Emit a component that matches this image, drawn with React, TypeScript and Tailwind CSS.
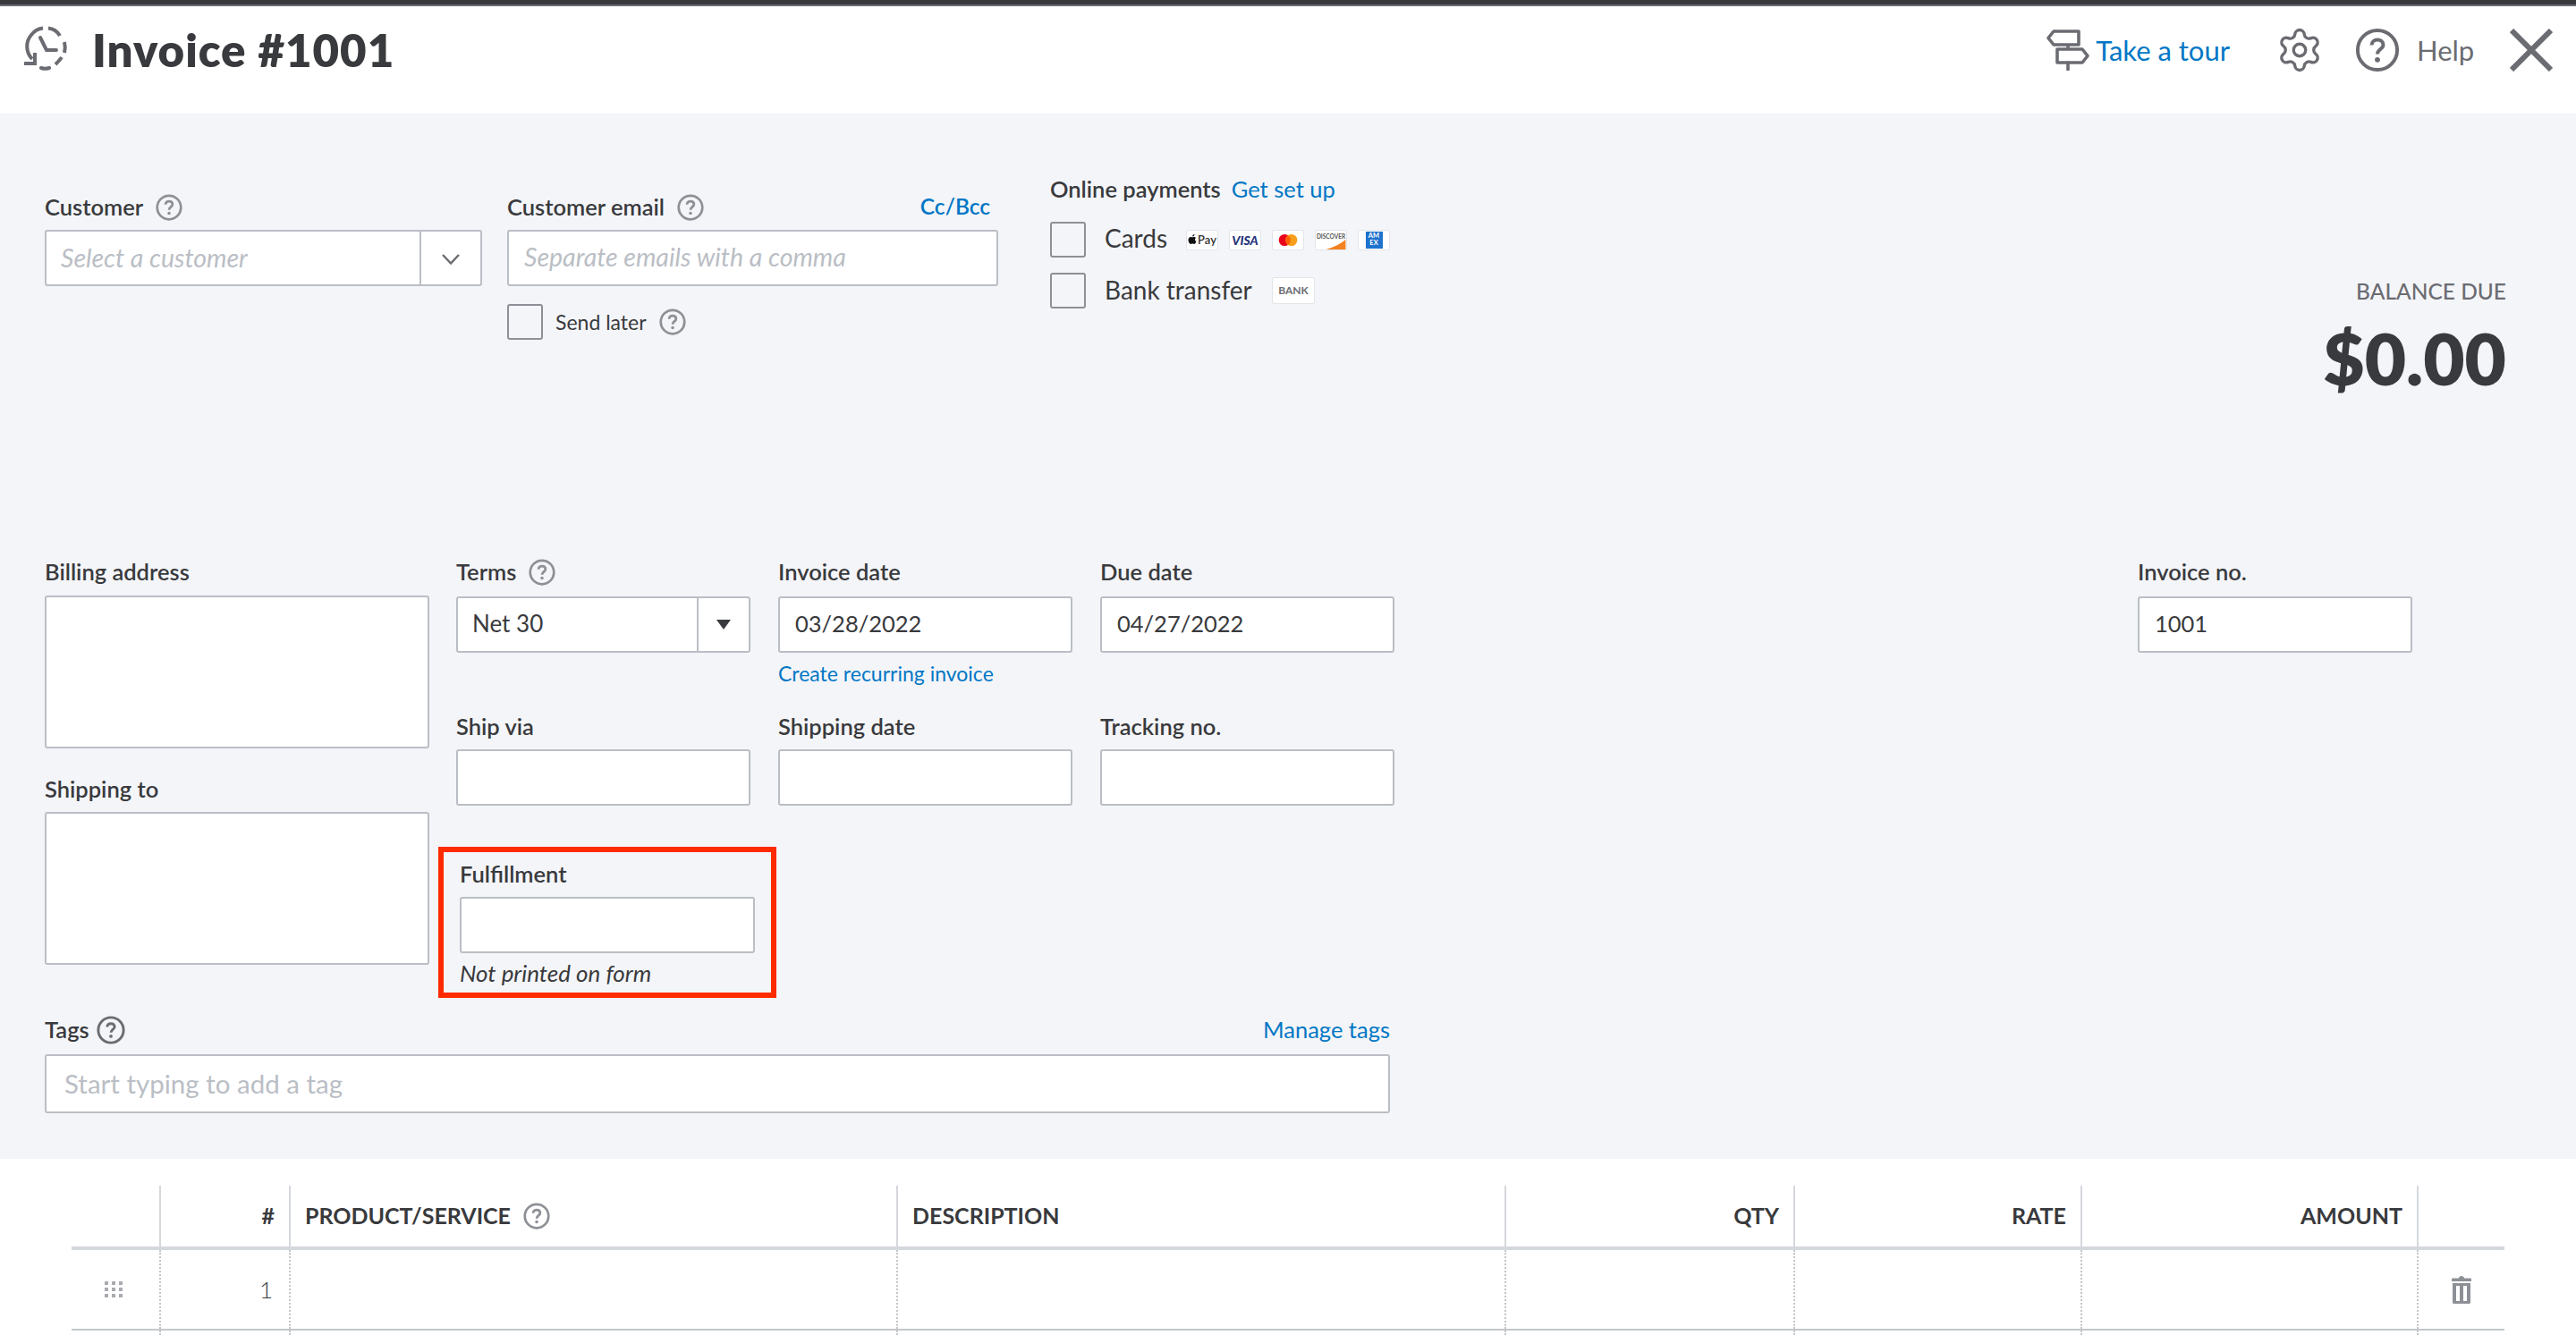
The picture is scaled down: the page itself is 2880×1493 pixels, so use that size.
import { Settings } from "lucide-react";

function HelpIcon({ className = "h-[30px] w-[30px]", strokeWidth = 2.2 }: { className?: string; strokeWidth?: number }) {
  return (
    <svg viewBox="0 0 24 24" fill="none" className={className}>
      <circle cx="12" cy="12" r="10.6" stroke="currentColor" strokeWidth={strokeWidth} />
      <path
        d="M8.9 9.400c0-1.800 1.300-2.900 3.100-2.900s3.100 1.100 3.100 2.700c0 2.300-3.100 2.400-3.100 4.900"
        stroke="currentColor"
        strokeWidth={strokeWidth}
      />
      <circle cx="12" cy="17.200" r="1.400" fill="currentColor" />
    </svg>
  );
}

function Label({ children, className = "" }: { children: React.ReactNode; className?: string }) {
  return (
    <div className={`flex h-[28px] items-center pb-[2px] text-[25.5px] font-semibold text-[#393a3d] ${className}`}>
      {children}
    </div>
  );
}

function Hint() {
  return (
    <span className="ml-[14px] mt-[2px] text-[#8d9096]">
      <HelpIcon />
    </span>
  );
}

function Input({ value, placeholder }: { value?: string; placeholder?: string }) {
  return (
    <div className="flex h-[63px] items-center rounded-[3px] border-2 border-[#babec5] bg-white px-[17px] pb-[2px] text-[25.5px] text-[#393a3d]">
      {value}
      {placeholder && <span className="text-[28.5px] italic text-[#babec5]">{placeholder}</span>}
    </div>
  );
}

function Checkbox() {
  return <div className="h-[40px] w-[40px] shrink-0 rounded-[3px] border-2 border-[#8d9096] bg-[#f4f5f8]" />;
}

function Badge({ children, className = "" }: { children: React.ReactNode; className?: string }) {
  return (
    <div
      className={`flex h-[23px] w-[36px] items-center justify-center overflow-hidden rounded-[2px] border border-[#e3e5e8] bg-white ${className}`}
    >
      {children}
    </div>
  );
}

function Payments() {
  return (
    <div className="w-[440px]">
      <div className="flex h-[28px] items-center gap-[12px] pb-[2px] text-[25.5px]">
        <span className="font-semibold text-[#393a3d]">Online payments</span>
        <span className="text-[#0077c5]">Get set up</span>
      </div>
      <div className="mt-[22px] flex h-[40px] items-center">
        <Checkbox />
        <span className="ml-[21px] w-[91px] pb-[4px] text-[28px] text-[#393a3d]">Cards</span>
        <div className="flex items-center gap-[12px]">
          <Badge className="gap-[1px] border-[#8d9096]">
            <svg viewBox="0 0 10 12" className="h-[12px] w-[10px]">
              <path
                d="M7.500 0c0 1.300-.9 2.500-2.300 2.500C5.100 1.200 6.200.1 7.500 0zM5 3.300c.7 0 1.100-.4 2-.4.800 0 1.500.4 2 1-1.600 1-1.300 3.200.5 4-.5 1.300-1.400 3-2.500 3-.7 0-1-.4-1.900-.4s-1.200.4-1.900.4C1.900 10.900.500 8.500.500 6.500.500 4.300 1.900 3 3.200 3c.7 0 1.300.3 1.800.3z"
                fill="#111"
              />
            </svg>
            <span className="text-[13px] font-semibold leading-none text-[#333]">Pay</span>
          </Badge>
          <Badge>
            <span className="text-[14px] font-black italic text-[#26337a]">VISA</span>
          </Badge>
          <Badge>
            <svg viewBox="0 0 24 16" className="h-[15px] w-[24px]">
              <circle cx="8" cy="8" r="7" fill="#eb001b" />
              <circle cx="16" cy="8" r="7" fill="#f79e1b" />
              <path d="M12 2.300a7 7 0 0 1 0 11.400a7 7 0 0 1 0-11.400z" fill="#ff5f00" />
            </svg>
          </Badge>
          <Badge className="relative">
            <span className="mb-[6px] text-[6.500px] font-bold text-[#555]">DISCOVER</span>
            <svg viewBox="0 0 36 23" className="absolute inset-0 h-full w-full">
              <path d="M12 23C22 20 30 16 36 11V23Z" fill="#f58220" />
            </svg>
          </Badge>
          <Badge>
            <div className="flex h-[19px] w-[19px] flex-col items-center justify-center bg-[#1f72cd] text-[7.500px] font-bold leading-[8px] text-white">
              <span>AM</span>
              <span>EX</span>
            </div>
          </Badge>
        </div>
      </div>
      <div className="mt-[17px] flex h-[40px] items-center">
        <Checkbox />
        <span className="ml-[21px] w-[187px] pb-[2px] text-[28px] text-[#393a3d]">Bank transfer</span>
        <Badge className="h-[30px] w-[48px] border-[#dcdee2]">
          <span className="text-[12px] font-bold text-[#6b6c72]">BANK</span>
        </Badge>
      </div>
    </div>
  );
}

function Header() {
  return (
    <header className="h-[127px] bg-white">
      <div className="h-[5px] bg-[#393a3d]" />
      <div className="h-[2px] bg-[#6b6c72]" />
      <div className="flex items-start pl-[26px] pr-[26px] pt-[22px] text-[#6b6c72]">
        <svg viewBox="0 0 52 50" fill="none" stroke="currentColor" strokeWidth="4" className="h-[50px] w-[52px]">
          <path d="M10 37C3 30 2 18 9 10C12 6 17 3 22 2.500" />
          <path d="M28 2.500C33 3 38 6 41 11" />
          <path d="M46 18C47 22 47 26 46 30" />
          <path d="M43 35C41 38 39 40 36 43" />
          <path d="M29 47C26 48 23 48 20 47" strokeLinecap="round" />
          <path d="M1 42H13V30" />
          <path d="M19 13L26 27H37" strokeLinecap="round" />
        </svg>
        <h1 className="ml-[25px] -mt-[2px] text-[51px] font-extrabold leading-[58px] tracking-[1px] text-[#393a3d]">
          Invoice #1001
        </h1>
        <div className="ml-auto flex items-center">
          <svg viewBox="0 0 48 46" fill="none" stroke="currentColor" strokeWidth="3.600" strokeLinejoin="round" className="h-[46px] w-[48px]">
            <path d="M8 2H36V17H8L2 9.500Z" />
            <path d="M24 17V22" />
            <path d="M12 22H40L46 29.500L40 37H12Z" />
            <path d="M24 37V45" strokeLinecap="round" />
          </svg>
          <span className="ml-[7px] text-[31px] text-[#0077c5]">Take a tour</span>
          <Settings className="ml-[51px] h-[54px] w-[54px]" strokeWidth={1.500} />
          <HelpIcon className="ml-[35px] h-[50px] w-[50px]" strokeWidth={1.900} />
          <span className="ml-[19px] w-[62px] text-[31px]">Help</span>
          <svg viewBox="0 0 48 48" stroke="currentColor" strokeWidth="6" className="ml-[42px] h-[48px] w-[48px]">
            <path d="M2 2L46 46M46 2L2 46" />
          </svg>
        </div>
      </div>
    </header>
  );
}

function InvoiceForm() {
  return (
    <section className="bg-[#f4f5f8] pl-[50px] pt-[71px]">
      {/* customer row */}
      <div className="flex h-[428px] items-start">
        <div className="mt-[20px] w-[489px]">
          <Label className="mb-[11px]">
            Customer
            <Hint />
          </Label>
          <div className="flex h-[63px] rounded-[3px] border-2 border-[#babec5] bg-white">
            <div className="flex flex-1 items-center pl-[16px] text-[28.5px] italic text-[#babec5]">Select a customer</div>
            <div className="flex w-[68px] items-center justify-center border-l-2 border-[#babec5] pt-[3px]">
              <svg viewBox="0 0 20 12" fill="none" stroke="#6b6c72" strokeWidth="2.400" className="h-[12px] w-[20px]">
                <path d="M1 1L10 10.500L19 1" />
              </svg>
            </div>
          </div>
        </div>
        <div className="ml-[28px] mt-[20px] w-[549px]">
          <div className="mb-[11px] flex h-[28px] items-center justify-between pr-[9px]">
            <Label>
              Customer email
              <Hint />
            </Label>
            <span className="pb-[2px] text-[24.5px] font-semibold text-[#0077c5]">Cc/Bcc</span>
          </div>
          <Input placeholder="Separate emails with a comma" />
          <div className="mt-[20px] flex items-center">
            <Checkbox />
            <span className="ml-[14px] text-[23px] text-[#393a3d]">Send later</span>
            <span className="ml-[14px] text-[#8d9096]">
              <HelpIcon />
            </span>
          </div>
        </div>
        <div className="ml-[58px]">
          <Payments />
        </div>
        <div className="ml-auto mr-[78px] mt-[110px] text-right text-[#393a3d]">
          <div className="text-[24.5px] font-medium text-[#6b6c72]">BALANCE DUE</div>
          <div className="mt-[10px] text-[80px] font-extrabold leading-[90px]">$0.00</div>
        </div>
      </div>

      {/* address and dates */}
      <div className="flex items-start">
        <div className="w-[430px]">
          <Label className="mb-[12px]">Billing address</Label>
          <div className="h-[171px] rounded-[3px] border-2 border-[#babec5] bg-white" />
          <Label className="mb-[11px] mt-[32px]">Shipping to</Label>
          <div className="h-[171px] rounded-[3px] border-2 border-[#babec5] bg-white" />
        </div>
        <div className="ml-[30px] w-[1050px]">
          <div className="grid grid-cols-[329px_329px_329px] gap-x-[31px]">
            <div>
              <Label className="mb-[13px]">
                Terms
                <Hint />
              </Label>
              <div className="flex h-[63px] rounded-[3px] border-2 border-[#babec5] bg-white text-[26px] text-[#393a3d]">
                <div className="flex flex-1 items-center pb-[2px] pl-[16px]">Net 30</div>
                <div className="flex w-[58px] items-center justify-center border-l-2 border-[#babec5]">
                  <svg viewBox="0 0 16 11" className="h-[11px] w-[16px]">
                    <path d="M0 0H16L8 11Z" fill="#393a3d" />
                  </svg>
                </div>
              </div>
            </div>
            <div>
              <Label className="mb-[13px]">Invoice date</Label>
              <Input value="03/28/2022" />
              <div className="mt-[9px] h-[30px] text-[23px] leading-[28px] text-[#0077c5]">Create recurring invoice</div>
            </div>
            <div>
              <Label className="mb-[13px]">Due date</Label>
              <Input value="04/27/2022" />
            </div>
            <div className="mt-[30px]">
              <Label className="mb-[11px]">Ship via</Label>
              <Input />
            </div>
            <div className="mt-[30px]">
              <Label className="mb-[11px]">Shipping date</Label>
              <Input />
            </div>
            <div className="mt-[30px]">
              <Label className="mb-[11px]">Tracking no.</Label>
              <Input />
            </div>
          </div>
          <div className="-ml-[20px] mt-[46px] w-[378px] border-[6px] border-[#fe2a00] px-[18px] pb-[8px] pt-[11px]">
            <Label className="mb-[11px]">Fulfillment</Label>
            <Input />
            <div className="mt-[8px] h-[28px] text-[26px] italic leading-[28px] text-[#393a3d]">Not printed on form</div>
          </div>
        </div>
        <div className="ml-[830px] w-[307px]">
          <Label className="mb-[13px]">Invoice no.</Label>
          <Input value="1001" />
        </div>
      </div>

      {/* tags */}
      <div className="mt-[22px] w-[1504px] pb-[51px]">
        <div className="mb-[13px] flex h-[28px] items-center justify-between">
          <Label>
            Tags
            <span className="ml-[8px] mt-[2px] text-[#6b6c72]">
              <HelpIcon className="h-[32px] w-[32px]" />
            </span>
          </Label>
          <span className="pb-[2px] text-[25.5px] text-[#0077c5]">Manage tags</span>
        </div>
        <div className="flex h-[66px] items-center rounded-[3px] border-2 border-[#babec5] bg-white pl-[20px] text-[29.5px] text-[#babec5]">
          Start typing to add a tag
        </div>
      </div>
    </section>
  );
}

const cols = "grid grid-cols-[100px_145px_679px_680px_323px_321px_376px_96px]";

function LineTable() {
  const headCell = "flex items-center border-r-2 border-[#d4d7dc] px-[16px] text-[25px] font-bold text-[#393a3d]";
  const rowCell = "border-r-2 border-dotted border-[#c4c6ca]";
  return (
    <section className="bg-white pl-[80px] pr-[80px] pt-[30px]">
      <div className={`${cols} h-[72px] border-b-4 border-[#d4d7dc]`}>
        <div className={headCell} />
        <div className={`${headCell} justify-end`}>#</div>
        <div className={`${headCell} gap-[14px]`}>
          PRODUCT/SERVICE
          <span className="font-normal text-[#8d9096]">
            <HelpIcon />
          </span>
        </div>
        <div className={headCell}>DESCRIPTION</div>
        <div className={`${headCell} justify-end`}>QTY</div>
        <div className={`${headCell} justify-end`}>RATE</div>
        <div className={`${headCell} justify-end`}>AMOUNT</div>
        <div />
      </div>
      <div className={`${cols} h-[90px] border-b-2 border-[#c4c6ca]`}>
        <div className={`${rowCell} flex items-center justify-center pr-[4px]`}>
          <svg viewBox="0 0 20 18" className="h-[18px] w-[20px]" fill="#a9abb0">
            <path d="M0 0h4v4H0zM8 0h4v4H8zM16 0h4v4h-4zM0 7h4v4H0zM8 7h4v4H8zM16 7h4v4h-4zM0 14h4v4H0zM8 14h4v4H8zM16 14h4v4h-4z" />
          </svg>
        </div>
        <div className={`${rowCell} flex items-center justify-end pr-[18px] text-[26px] font-light text-[#393a3d]`}>1</div>
        <div className={rowCell} />
        <div className={rowCell} />
        <div className={rowCell} />
        <div className={rowCell} />
        <div className={rowCell} />
        <div className="flex items-center justify-center">
          <svg viewBox="0 0 22 31" className="h-[31px] w-[22px]" fill="#8d9096">
            <path d="M8 2.500C8 1 9.500 0 11 0s3 1 3 2.500h7a1 1 0 0 1 1 1V6H0V3.500a1 1 0 0 1 1-1z" />
            <path d="M1 8h20v21.500a1.500 1.500 0 0 1-1.500 1.500h-17A1.500 1.500 0 0 1 1 29.500zM5 11v17h4V11zM13 11v17h4V11z" fillRule="evenodd" />
          </svg>
        </div>
      </div>
      <div className={`${cols} h-[20px]`}>
        <div className={rowCell} />
        <div className={rowCell} />
        <div className={rowCell} />
        <div className={rowCell} />
        <div className={rowCell} />
        <div className={rowCell} />
        <div className={rowCell} />
        <div />
      </div>
    </section>
  );
}

export default function App() {
  return (
    <div className="h-[1493px] w-[2880px] overflow-hidden bg-white font-['Lato',sans-serif]">
      <Header />
      <InvoiceForm />
      <LineTable />
    </div>
  );
}
